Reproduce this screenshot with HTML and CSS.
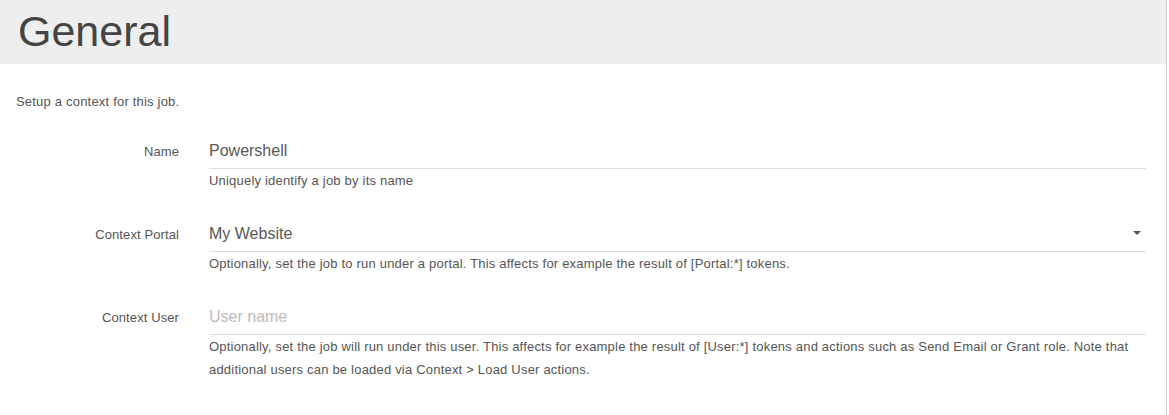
FILE: index.html
```html
<!DOCTYPE html>
<html lang="en">
<head>
<meta charset="utf-8">
<title>General</title>
<link rel="stylesheet" href="styles.css">
</head>
<body>
<div class="page">
  <header class="page-header">
    <h1 class="page-title">General</h1>
  </header>
  <main class="content">
    <p class="intro">Setup a context for this job.</p>
    <form class="form">
      <div class="form-row">
        <label class="form-label" for="name">Name</label>
        <input class="form-input" id="name" type="text" value="Powershell">
        <p class="form-help">Uniquely identify a job by its name</p>
      </div>
      <div class="form-row">
        <label class="form-label">Context Portal</label>
        <div class="form-select">
          <span class="select-value">My Website</span>
          <span class="select-caret"></span>
        </div>
        <p class="form-help">Optionally, set the job to run under a portal. This affects for example the result of [Portal:*] tokens.</p>
      </div>
      <div class="form-row">
        <label class="form-label" for="user">Context User</label>
        <input class="form-input" id="user" type="text" placeholder="User name">
        <p class="form-help">Optionally, set the job will run under this user. This affects for example the result of [User:*] tokens and actions such as Send Email or Grant role. Note that additional users can be loaded via Context &gt; Load User actions.</p>
      </div>
    </form>
  </main>
</div>
</body>
</html>
```

FILE: styles.css
```css
html, body {
  margin: 0;
  padding: 0;
  background: #ffffff;
}

body {
  font-family: "Liberation Sans", Arial, sans-serif;
  color: #555555;
}

.page {
  width: 1166px;
  min-height: 100vh;
  border-right: 1px solid #cfcfcf;
  background: #ffffff;
}

.page-header {
  background: #eeeeee;
  height: 64px;
  box-sizing: border-box;
  padding: 6px 16px 0 18px;
}

.page-title {
  margin: 0;
  font-size: 43px;
  font-weight: normal;
  line-height: 50px;
  color: #444444;
}

.content {
  padding: 28px 20px 20px 16px;
}

.intro {
  margin: 0 0 22px 0;
  font-size: 13px;
  line-height: 20px;
  letter-spacing: 0.2px;
  color: #555555;
}

.form {
  display: flex;
  flex-direction: column;
  gap: 25px;
}

.form-row {
  display: grid;
  grid-template-columns: 163px 1fr;
  column-gap: 30px;
}

.form-label {
  grid-column: 1;
  grid-row: 1;
  text-align: right;
  font-size: 13px;
  line-height: 35px;
  letter-spacing: 0.1px;
  color: #555555;
}

.form-input,
.form-select {
  grid-column: 2;
  grid-row: 1;
  width: 100%;
  height: 35px;
  box-sizing: border-box;
  margin: 0;
  padding: 0 0 1px 0;
  border: none;
  border-bottom: 1px solid #dddddd;
  background: transparent;
  font-family: "Liberation Sans", Arial, sans-serif;
  font-size: 16px;
  color: #585858;
  outline: none;
}

.form-input::placeholder {
  color: #bbbbbb;
  opacity: 1;
}

.form-select {
  display: flex;
  align-items: center;
  justify-content: space-between;
}

.select-caret {
  width: 0;
  height: 0;
  margin-right: 5px;
  margin-top: -1px;
  border-left: 4px solid transparent;
  border-right: 4px solid transparent;
  border-top: 4px solid #555555;
}

.form-help {
  grid-column: 2;
  grid-row: 2;
  margin: 0;
  font-size: 13px;
  line-height: 23px;
  letter-spacing: 0.2px;
  color: #555555;
}
```
